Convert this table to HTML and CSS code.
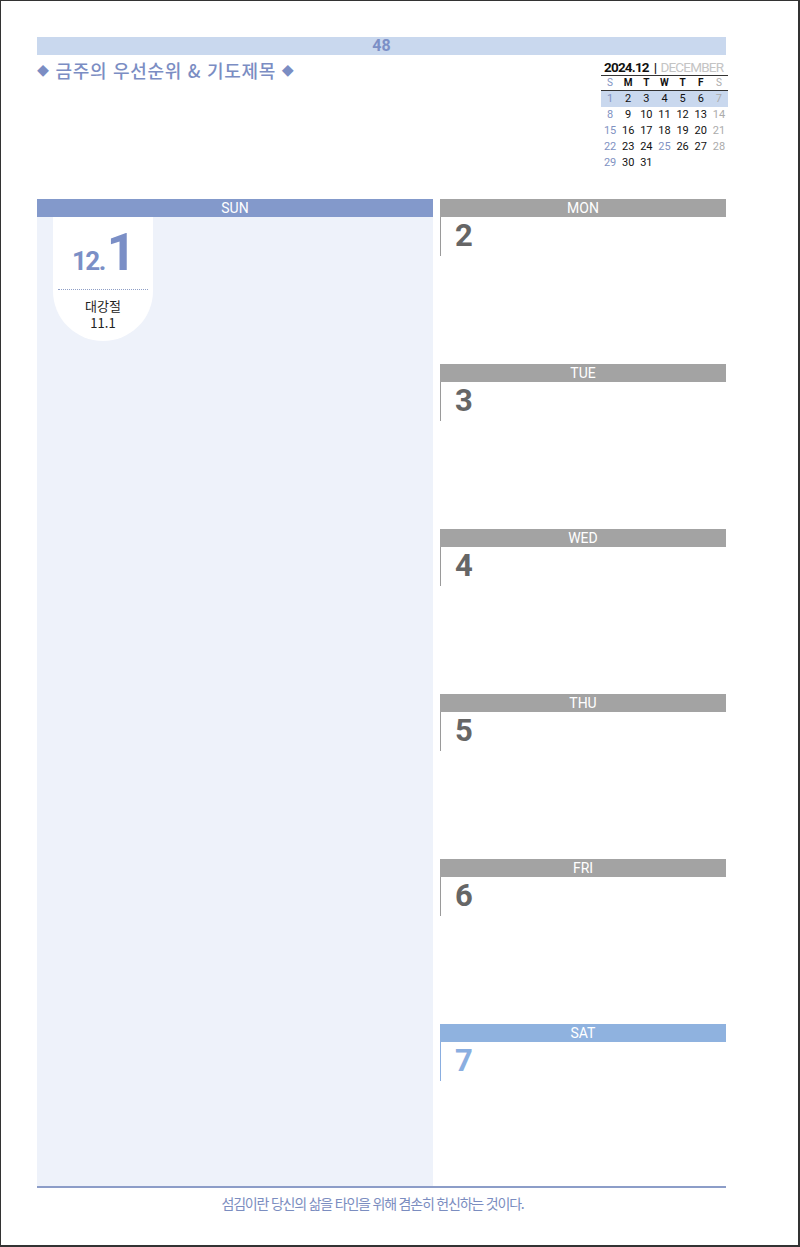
FILE: index.html
```html
<!DOCTYPE html>
<html lang="ko">
<head>
<meta charset="utf-8">
<title>48</title>
<link rel="stylesheet" href="styles.css">
</head>
<body>
<div class="page">
  <div class="topbar">48</div>
  <div class="head">
    <div class="title"><span class="dia">◆</span> 금주의 우선순위 &amp; 기도제목 <span class="dia">◆</span></div>
    <div class="mini">
      <div class="mini-title"><b>2024.12</b><span class="sep">|</span><span class="mname">DECEMBER</span></div>
      <div class="mrow dow"><span class="su">S</span><span>M</span><span>T</span><span>W</span><span>T</span><span>F</span><span class="sa">S</span></div>
      <div class="mrow hl"><span class="su">1</span><span>2</span><span>3</span><span>4</span><span>5</span><span>6</span><span class="sa">7</span></div>
      <div class="mrow"><span class="su">8</span><span>9</span><span>10</span><span>11</span><span>12</span><span>13</span><span class="sa">14</span></div>
      <div class="mrow"><span class="su">15</span><span>16</span><span>17</span><span>18</span><span>19</span><span>20</span><span class="sa">21</span></div>
      <div class="mrow"><span class="su">22</span><span>23</span><span>24</span><span class="su">25</span><span>26</span><span>27</span><span class="sa">28</span></div>
      <div class="mrow"><span class="su">29</span><span>30</span><span>31</span><span></span><span></span><span></span><span></span></div>
    </div>
  </div>
  <div class="main">
    <div class="sun">
      <div class="dh dh-sun">SUN</div>
      <div class="sun-body">
        <div class="badge">
          <div class="bdate"><span class="bm">12.</span><span class="bd">1</span></div>
          <div class="bline"></div>
          <div class="bnote">대강절<br>11.1</div>
        </div>
      </div>
    </div>
    <div class="days">
      <div class="day"><div class="dh">MON</div><div class="num">2</div></div>
      <div class="day"><div class="dh">TUE</div><div class="num">3</div></div>
      <div class="day"><div class="dh">WED</div><div class="num">4</div></div>
      <div class="day"><div class="dh">THU</div><div class="num">5</div></div>
      <div class="day"><div class="dh">FRI</div><div class="num">6</div></div>
      <div class="day sat"><div class="dh">SAT</div><div class="num">7</div></div>
    </div>
  </div>
  <div class="foot">섬김이란 당신의 삶을 타인을 위해 겸손히 헌신하는 것이다.</div>
</div>
</body>
</html>
```
FILE: styles.css
```css
* { box-sizing: border-box; }
html, body { margin: 0; padding: 0; background: #fff; }
body { font-family: "Noto Sans", "Noto Sans CJK KR", sans-serif; }

.page {
  width: 800px;
  height: 1247px;
  border: 1px solid #333;
  border-right-width: 2px;
  border-bottom-width: 2px;
  padding: 36px 72px 0 36px;
  display: flex;
  flex-direction: column;
}

.topbar {
  height: 18px;
  background: #c9d8ee;
  color: #7b8fc6;
  font-family: "Roboto", "Liberation Sans", sans-serif;
  font-weight: 700;
  font-size: 16px;
  line-height: 18px;
  text-align: center;
}

.head {
  height: 144px;
  display: flex;
  justify-content: space-between;
  align-items: flex-start;
}

.title {
  margin-top: 2px;
  font-family: "Noto Sans CJK KR", sans-serif;
  font-weight: 500;
  font-size: 18px;
  line-height: 26px;
  color: #7b8dc3;
  white-space: nowrap;
  letter-spacing: 0.7px;
}
.title .dia {
  font-size: 12px;
  vertical-align: 2px;
}

.mini {
  margin-top: 4px;
  width: 127px;
  margin-right: -2px;
  font-family: "Roboto", "Liberation Sans", sans-serif;
}
.mini-title {
  height: 17px;
  border-bottom: 1px solid #333;
  font-size: 13.5px;
  line-height: 17px;
  letter-spacing: -0.8px;
  white-space: nowrap;
  padding-left: 3px;
}
.mini-title b { color: #111; font-weight: 700; }
.mini-title .sep { color: #222; font-weight: 700; margin: 0 4px 0 5px; }
.mini-title .mname { color: #c4c4c4; font-weight: 400; }

.mrow {
  display: grid;
  grid-template-columns: repeat(7, 1fr);
  height: 16px;
  font-size: 11px;
  line-height: 16px;
  text-align: center;
  color: #111;
}
.mrow.dow {
  height: 15px;
  line-height: 14px;
  font-size: 10px;
  font-weight: 700;
  border-bottom: 1px solid #333;
}
.mrow.hl { background: #c9d8ee; }
.mrow .su { color: #8192c2; font-weight: 400; }
.mrow .sa { color: #ababab; font-weight: 400; }

.main {
  height: 987px;
  display: flex;
  gap: 7px;
}

.dh {
  height: 18px;
  background: #a3a3a3;
  color: #fff;
  font-family: "Roboto", "Liberation Sans", sans-serif;
  font-size: 14px;
  line-height: 18px;
  text-align: center;
}

.sun {
  width: 396px;
  display: flex;
  flex-direction: column;
}
.dh-sun { background: #8399cb; }
.sun-body {
  flex: 1;
  background: #eef2fa;
  padding-left: 16px;
}

.badge {
  width: 100px;
  height: 124px;
  background: #fff;
  border-radius: 0 0 50px 50px;
  display: flex;
  flex-direction: column;
  align-items: center;
}
.bdate {
  margin-top: 7px;
  height: 58px;
  font-family: "Roboto", "Liberation Sans", sans-serif;
  font-weight: 700;
  color: #7b8fc6;
  line-height: 58px;
  white-space: nowrap;
  margin-left: 2px;
}
.bm { font-size: 26px; letter-spacing: -1.5px; }
.bd { font-size: 51px; margin-left: 2px; }
.bline {
  margin-top: 7px;
  width: 90px;
  border-top: 1px dotted #8f9fc6;
}
.bnote {
  margin-top: 7px;
  font-family: "Noto Sans CJK KR", sans-serif;
  font-size: 13px;
  line-height: 17px;
  color: #222;
  text-align: center;
}

.days {
  width: 286px;
  display: flex;
  flex-direction: column;
}
.day { height: 165px; }
.day.sat { height: auto; flex: 1; }
.num {
  height: 39px;
  border-left: 1px solid #9a9a9a;
  padding-left: 14px;
  font-family: "Roboto", "Liberation Sans", sans-serif;
  font-weight: 700;
  font-size: 31px;
  line-height: 38px;
  color: #666;
}
.sat .dh { background: #8fb2df; }
.sat .num { color: #8aaee0; border-left-color: #8aaee0; }

.foot {
  border-top: 2px solid #8c9dc8;
  height: 32px;
  padding-right: 18px;
  font-family: "Noto Sans CJK KR", sans-serif;
  font-size: 14px;
  line-height: 30px;
  color: #7b8dc0;
  text-align: center;
  letter-spacing: -1.2px;
}
```
